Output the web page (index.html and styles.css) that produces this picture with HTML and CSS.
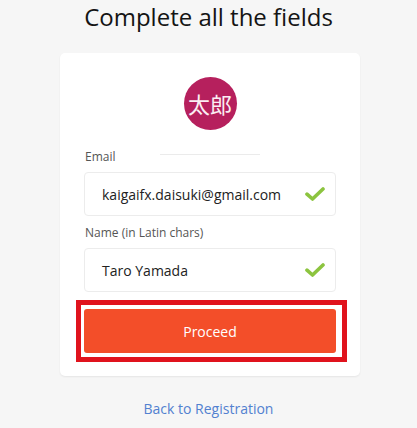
FILE: index.html
```html
<!DOCTYPE html>
<html>
<head>
<meta charset="utf-8">
<link rel="stylesheet" href="styles.css">
</head>
<body>
<h1 class="title">Complete all the fields</h1>
<div class="card">
  <div class="avatar">太郎</div>
  <div class="divider"></div>
  <label class="label label-first">Email</label>
  <div class="field">
    <span class="value">kaigaifx.daisuki@gmail.com</span>
    <svg class="check" width="20" height="14" viewBox="0 0 20 14"><path d="M2 7.2 L7.5 12 L18 2" fill="none" stroke="#8cc43f" stroke-width="3.6" stroke-linecap="round" stroke-linejoin="round"/></svg>
  </div>
  <label class="label">Name (in Latin chars)</label>
  <div class="field">
    <span class="value">Taro Yamada</span>
    <svg class="check" width="20" height="14" viewBox="0 0 20 14"><path d="M2 7.2 L7.5 12 L18 2" fill="none" stroke="#8cc43f" stroke-width="3.6" stroke-linecap="round" stroke-linejoin="round"/></svg>
  </div>
  <button class="proceed">Proceed</button>
</div>
<a class="back" href="#">Back to Registration</a>
</body>
</html>
```
FILE: styles.css
```css
html, body {
  margin: 0;
  padding: 0;
}
body {
  background: #f6f6f6;
  font-family: "Open Sans", "Noto Sans", sans-serif;
  width: 417px;
  height: 428px;
  overflow: hidden;
}
.title {
  margin: 0;
  padding-top: 2px;
  font-size: 24px;
  line-height: 30px;
  font-weight: 400;
  text-align: center;
  color: #141414;
}
.card {
  box-sizing: border-box;
  width: 300px;
  margin: 21px 0 0 60px;
  padding: 24px 24px 23px 24px;
  background: #fff;
  border-radius: 5px;
  box-shadow: 0 1px 2px rgba(0, 0, 0, 0.07);
  display: flex;
  flex-direction: column;
}
.avatar {
  align-self: center;
  width: 53px;
  height: 53px;
  border-radius: 50%;
  background: #b6205d;
  color: #fbeef3;
  font-family: "Noto Sans CJK JP", sans-serif;
  font-size: 22px;
  line-height: 53px;
  text-align: center;
}
.divider {
  align-self: center;
  width: 100px;
  height: 1px;
  background: #ebebeb;
  margin-top: 24px;
}
.label {
  display: block;
  font-size: 12px;
  line-height: 16px;
  color: #555;
  margin: 9px 0 7px 1px;
}
.label-first {
  margin-top: -6px;
}
.field {
  box-sizing: border-box;
  height: 44px;
  border: 1px solid #ececec;
  border-radius: 4px;
  display: flex;
  align-items: center;
  justify-content: space-between;
  padding: 0 10px 0 17px;
}
.value {
  font-size: 14px;
  color: #222;
}
.check {
  display: block;
}
.proceed {
  position: relative;
  margin-top: 17px;
  height: 44px;
  border: none;
  border-radius: 3px;
  background: #f34e29;
  color: #fff;
  font-family: "Open Sans", sans-serif;
  font-size: 14px;
  padding: 0;
}
.proceed::after {
  content: "";
  position: absolute;
  top: -9px;
  bottom: -9px;
  left: -8px;
  right: -11px;
  border: 5px solid #e0131d;
}
.back {
  display: block;
  margin-top: 23px;
  text-align: center;
  font-size: 14px;
  line-height: 20px;
  color: #5281d0;
  text-decoration: none;
}
```
